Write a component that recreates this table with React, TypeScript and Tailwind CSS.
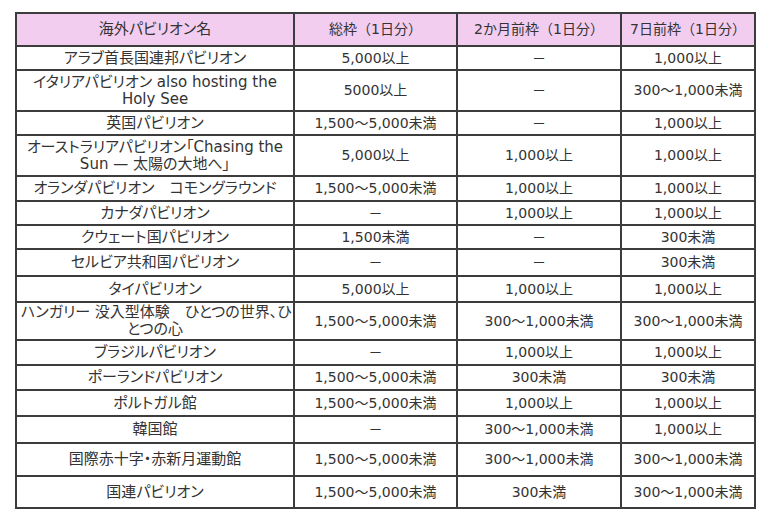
const rows: { name: React.ReactNode; total: string; twoMonth: string; sevenDay: string; h: string }[] = [
  { name: "アラブ首長国連邦パビリオン", total: "5,000以上", twoMonth: "－", sevenDay: "1,000以上", h: "h-[24px]" },
  {
    name: (
      <>
        イタリアパビリオン also hosting the
        <br />
        Holy See
      </>
    ),
    total: "5000以上",
    twoMonth: "－",
    sevenDay: "300～1,000未満",
    h: "h-[41px]",
  },
  { name: "英国パビリオン", total: "1,500～5,000未満", twoMonth: "－", sevenDay: "1,000以上", h: "h-[24px]" },
  {
    name: (
      <>
        オーストラリアパビリオン「Chasing the
        <br />
        Sun — 太陽の大地へ」
      </>
    ),
    total: "5,000以上",
    twoMonth: "1,000以上",
    sevenDay: "1,000以上",
    h: "h-[41px]",
  },
  { name: "オランダパビリオン　コモングラウンド", total: "1,500～5,000未満", twoMonth: "1,000以上", sevenDay: "1,000以上", h: "h-[25px]" },
  { name: "カナダパビリオン", total: "－", twoMonth: "1,000以上", sevenDay: "1,000以上", h: "h-[24px]" },
  { name: "クウェート国パビリオン", total: "1,500未満", twoMonth: "－", sevenDay: "300未満", h: "h-[24px]" },
  { name: "セルビア共和国パビリオン", total: "－", twoMonth: "－", sevenDay: "300未満", h: "h-[27px]" },
  { name: "タイパビリオン", total: "5,000以上", twoMonth: "1,000以上", sevenDay: "1,000以上", h: "h-[26px]" },
  {
    name: (
      <>
        ハンガリー 没入型体験　ひとつの世界、ひ
        <br />
        とつの心
      </>
    ),
    total: "1,500～5,000未満",
    twoMonth: "300～1,000未満",
    sevenDay: "300～1,000未満",
    h: "h-[38px]",
  },
  { name: "ブラジルパビリオン", total: "－", twoMonth: "1,000以上", sevenDay: "1,000以上", h: "h-[25px]" },
  { name: "ポーランドパビリオン", total: "1,500～5,000未満", twoMonth: "300未満", sevenDay: "300未満", h: "h-[25px]" },
  { name: "ポルトガル館", total: "1,500～5,000未満", twoMonth: "1,000以上", sevenDay: "1,000以上", h: "h-[26px]" },
  { name: "韓国館", total: "－", twoMonth: "300～1,000未満", sevenDay: "1,000以上", h: "h-[27px]" },
  { name: "国際赤十字・赤新月運動館", total: "1,500～5,000未満", twoMonth: "300～1,000未満", sevenDay: "300～1,000未満", h: "h-[33px]" },
  { name: "国連パビリオン", total: "1,500～5,000未満", twoMonth: "300未満", sevenDay: "300～1,000未満", h: "h-[32px]" },
];

const cell = "border-2 border-[#3c3c3c] px-1 py-0 text-center align-middle";
const nameCell = `${cell} whitespace-nowrap text-[15px] [font-feature-settings:'palt']`;

export default function App() {
  return (
    <div className="min-h-[514px] w-[764px] bg-white pl-[15px] pt-[12px]">
      <table
        className="w-[739px] table-fixed border-collapse text-[14px] leading-[17px] text-[#333]"
        style={{ fontFamily: '"DejaVu Sans", "Noto Sans CJK JP", sans-serif' }}
      >
        <colgroup>
          <col className="w-[278px]" />
          <col className="w-[163px]" />
          <col className="w-[164px]" />
          <col className="w-[134px]" />
        </colgroup>
        <thead>
          <tr className="h-[33px] bg-[#f2cdf0]">
            <th className={`${nameCell} font-normal`}>海外パビリオン名</th>
            <th className={`${cell} font-normal`}>総枠（1日分）</th>
            <th className={`${cell} font-normal`}>2か月前枠（1日分）</th>
            <th className={`${cell} whitespace-nowrap font-normal`}>7日前枠（1日分）</th>
          </tr>
        </thead>
        <tbody>
          {rows.map((r, i) => (
            <tr key={i} className={r.h}>
              <td className={nameCell}>{r.name}</td>
              <td className={cell}>{r.total}</td>
              <td className={cell}>{r.twoMonth}</td>
              <td className={`${cell} whitespace-nowrap`}>{r.sevenDay}</td>
            </tr>
          ))}
        </tbody>
      </table>
    </div>
  );
}
